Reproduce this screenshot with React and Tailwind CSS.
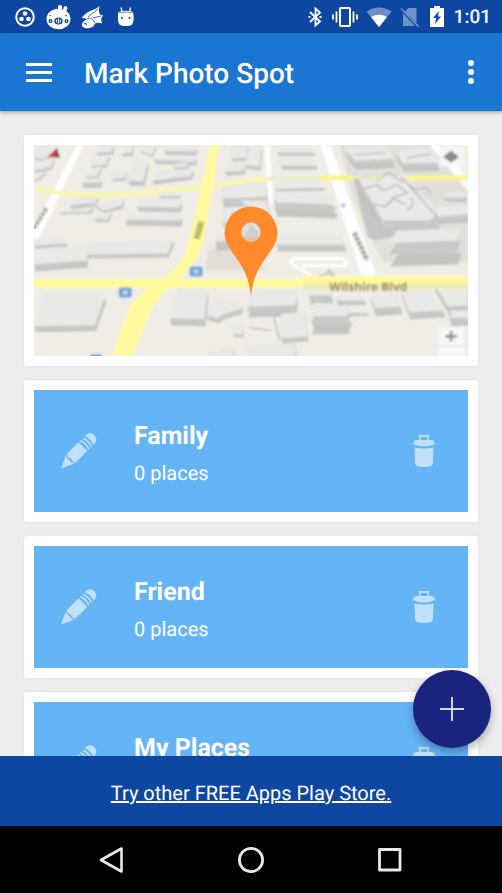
import React from "react";

const places = [
  { name: "Family", count: 0 },
  { name: "Friend", count: 0 },
  { name: "My Places", count: 0 },
];

// roof outline, height of the wall below it
const buildings = [
  ["0,2 18,0 22,8 8,14 0,12", 3],
  ["0,17 20,13 17,22 0,26", 3],
  ["0,28 12,27 6,33 0,35", 2],
  ["65,1 80,0 78,7 62,8", 3],
  ["61,12 76,10 72,20 57,21", 3],
  ["55,24 67,22 64,31 52,32", 3],
  ["50,34 68,33 67,38 48,38", 5],
  ["89,2 100,0 98,8 88,9", 3],
  ["108,0 122,2 118,10 106,6", 2],
  ["100,17 114,16 110,36 94,36", 5],
  ["80,27 92,24 92,33 78,34", 3],
  ["133,1 163,2 161,7 130,6", 4],
  ["122,12 163,13 161,17 120,15", 4],
  ["142,19 155,18 153,22 139,22", 3],
  ["125,26 160,24 157,31 118,36", 4],
  ["40,54 64,50 62,58 36,61", 4],
  ["28,66 60,62 56,67 24,68", 2],
  ["60,60 90,54 88,61 70,66", 3],
  ["64,70 78,67 74,75 60,74", 3],
  ["126,48 145,47 146,51 125,51", 3],
  ["106,54 148,56 146,63 103,62", 5],
  ["94,71 148,69 147,76 91,75", 6],
  ["0,94 30,93 33,99 0,101", 3],
  ["0,105 53,101 53,116 0,120", 7],
  ["54,99 140,95 134,109 53,110", 4],
  ["10,149 72,150 61,181 0,182", 6],
  ["144,144 174,144 171,175 136,174", 7],
  ["176,157 186,154 209,160 207,165 190,170 184,174 173,171", 5],
  ["200,181 209,181 209,190 200,190", 3],
  ["176,207 200,206 200,212 176,212", 0],
  ["215,202 260,199 262,212 214,212", 0],
  ["198,1 214,0 213,13 198,14", 3],
  ["193,20 212,18 210,26 191,27", 4],
  ["215,3 228,2 226,22 212,20", 4],
  ["189,38 233,36 234,52 189,54", 9],
  ["189,64 200,63 196,78 189,78", 4],
  ["207,56 233,56 235,66 224,70", 3],
  ["182,91 198,91 198,96 182,97", 9],
  ["246,2 278,2 282,8 244,8", 3],
  ["246,13 278,12 284,21 248,21", 4],
  ["242,39 284,37 292,43 242,44", 3],
  ["240,49 290,48 303,56 302,60 243,58", 14],
  ["245,91 308,91 312,100 243,100", 7],
  ["312,4 350,0 362,14 322,16", 9],
  ["362,7 398,3 406,18 370,19", 8],
  ["324,32 372,30 406,68 396,76 350,76", 15],
  ["414,48 430,48 434,53 410,53", 4],
  ["402,63 435,60 435,70 404,72", 8],
  ["364,86 428,84 424,96 356,98", 24],
  ["216,145 264,146 262,161 214,162", 11],
  ["276,140 296,142 300,151 276,151", 9],
  ["248,169 272,168 274,192 248,194", 5],
  ["281,158 318,160 314,172 278,172", 18],
  ["303,150 330,151 332,156 304,156", 5],
  ["314,165 334,166 334,169 314,169", 3],
  ["337,150 365,149 368,162 342,164", 8],
  ["368,146 396,145 412,166 376,168", 7],
  ["403,142 435,142 435,161 414,162", 5],
  ["416,169 435,168 435,173 418,174", 8],
];

// thin lines between roof sections
const roofLines = [
  "M330 44 l14 -4 6 6 14 -6 10 8 -16 6",
  "M340 60 l12 2 8 -8 12 6",
  "M376 40 l8 6 8 -4 6 8",
  "M374 66 l6 -6 -2 -6",
  "M344 36 l12 -8 14 10",
  "M322 34 l10 20 14 24",
  "M368 32 l36 40",
  "M322 10 l30 -2",
  "M374 13 l24 -4",
  "M216 184 l22 2 M240 170 l6 26",
  "M280 134 l16 -6 8 8 M292 130 l4 -4 12 14",
  "M400 142 l18 30",
];

function SpotMap() {
  return (
    <svg
      viewBox="0 0 435 212"
      preserveAspectRatio="xMidYMid slice"
      className="block h-[211px] w-full"
      role="img"
      aria-label="Map"
    >
      <defs>
        <filter id="soft" x="0" y="0" width="100%" height="100%">
          <feGaussianBlur stdDeviation="0.9" />
        </filter>
        <linearGradient id="hole" x1="0" y1="0" x2="0" y2="1">
          <stop offset="0.6" stopColor="#dededd" />
          <stop offset="0.75" stopColor="#e3c3a2" />
        </linearGradient>
      </defs>
      <rect width="435" height="212" fill="#f0ede7" />
      <g filter="url(#soft)">
        <rect width="435" height="212" fill="#f0ede7" />
        <path d="M306 0H400L435 36V118H350L322 60Z" fill="#e2e0dc" />
        <path d="M175 104H230V126H172Z" fill="#e1dcd6" />
        <path d="M320 32L334 92Q340 98 352 94L392 84 384 60Z" fill="#c6c6c5" />
        {/* side streets */}
        <path d="M43 0H50L21 60 0 104V84Z" fill="#fff" />
        <path d="M231 0H236L240 60H235Z" fill="#fff" />
        <path d="M396 0H406L435 34V46Z" fill="#fff" />
        <path
          d="M278 131L260 121Q254 115 262 114H310Q316 118 311 121H268"
          fill="none"
          stroke="#fff"
          strokeWidth="3"
        />
        {buildings.map(([points, wall]) => (
          <g key={points}>
            <polygon points={points} fill="#c4c4c2" transform={`translate(1 ${wall})`} />
            <polygon points={points} fill="#c9c9c7" transform={`translate(0 ${wall / 2})`} />
            <polygon points={points} fill="#e9e9e8" />
          </g>
        ))}
        {roofLines.map((d) => (
          <path key={d} d={d} fill="none" stroke="#bdbdbc" strokeWidth="1.6" />
        ))}
        <path d="M287 0H297L343 131H328Z" fill="#fff" />
        {/* main roads */}
        <path
          d="M0 45Q60 54 100 49L170 42 232 34"
          fill="none"
          stroke="#fbf8a0"
          strokeWidth="4"
        />
        <path d="M232 34H287" stroke="#eeedcb" strokeWidth="4" />
        <path d="M287 33H320M374 33H435" stroke="#fbf58d" strokeWidth="5" />
        <path d="M320 33H350" stroke="#e9e7c2" strokeWidth="3" />
        <path d="M0 139H262L276 136H435" fill="none" stroke="#fefa9c" strokeWidth="9" />
        <path d="M270 142H435" stroke="#efecb4" strokeWidth="6" />
        <path
          d="M177 0H185L179 45 169 100Q164 118 142 138 120 156 114 174L99 212H78L92 172Q98 152 124 138 150 122 155 97L167 45Z"
          fill="#fefa9c"
        />
        {/* street names */}
        <path d="M163 94L168 77" stroke="#a9a05c" strokeWidth="6" strokeDasharray="3 1" />
        <path d="M321 88L334 116" stroke="#a7a7a6" strokeWidth="5" strokeDasharray="4 1" />
        <path d="M0 84L13 63" stroke="#a7a7a6" strokeWidth="4" strokeDasharray="4 1" />
        <circle cx="310" cy="61" r="2.5" fill="#c9c9c9" />
        <text
          x="296"
          y="147"
          fill="#98875a"
          className="font-['Open_Sans'] text-[12px] font-bold"
        >
          Wilshire Blvd
        </text>
        {/* transit stops */}
        <rect x="85" y="143" width="13" height="10" rx="2" fill="#6ea3d8" />
        <rect x="89" y="146" width="5" height="4" fill="#c3dbf2" />
        <rect x="156" y="122" width="13" height="10" rx="2" fill="#6ea3d8" />
        <rect x="160" y="125" width="5" height="4" fill="#c3dbf2" />
        <rect x="56" y="210" width="12" height="6" rx="2" fill="#6ea3d8" />
        {/* compass and map controls */}
        <path d="M14 12L23 3 25 13Z" fill="#cf3a3e" />
        <path d="M23 3L26 13 21 12Z" fill="#6f4a4a" />
        <rect x="406" y="1" width="25" height="21" fill="#f7f7f7" opacity="0.85" />
        <path d="M410 12L418 6 426 12 418 18Z" fill="#8b8b8b" />
        <rect x="405" y="183" width="27" height="29" fill="#f7f7f7" />
        <path d="M405 202H432" stroke="#dedede" />
        <path d="M412 192H424M418 187V197" stroke="#888" strokeWidth="2.5" />
      </g>
      <circle cx="217" cy="88" r="11" fill="url(#hole)" />
      <path d="M211 93L217 80 225 88 223 93Z" fill="#cfcfce" />
      <path
        fillRule="evenodd"
        fill="#ff8a2c"
        d="M217.500 151C215 130 208 121 201 111 195 103 191 97 191 88.500A26.500 26.500 0 0 1 244 88.500C244 97 240 103 234 111 227 121 220 130 217.500 151ZM217.500 78A9.700 9.700 0 1 0 217.500 97.400A9.700 9.700 0 1 0 217.500 78Z"
      />
    </svg>
  );
}

function StatusBar() {
  return (
    <div className="flex h-[33px] shrink-0 items-center justify-between bg-[#0d47a1] pr-[11px] pl-[15px] text-white">
      <div className="flex items-center gap-2.5">
        <svg viewBox="0 0 20 20" className="size-5" fill="currentColor">
          <circle cx="10" cy="10" r="8.800" fill="none" stroke="currentColor" strokeWidth="2" />
          <circle cx="10" cy="6.500" r="2.300" />
          <circle cx="6.500" cy="12" r="2.300" />
          <circle cx="13.500" cy="12" r="2.300" />
        </svg>
        {/* pig */}
        <svg viewBox="0 0 26 26" className="size-[26px]" fill="currentColor">
          <path d="M13 5V2Q15 0 17 2V5ZM18 6L19 2.500Q22 1.500 22.500 4L21 8Z" />
          <ellipse cx="13.500" cy="15" rx="12" ry="10.300" />
          <g fill="#0d47a1">
            <ellipse cx="13.500" cy="17" rx="4.200" ry="3.600" />
            <circle cx="5.500" cy="17" r="2" />
            <circle cx="21.500" cy="17" r="2" />
            <circle cx="5" cy="11.500" r="0.700" />
            <circle cx="21" cy="11.500" r="0.700" />
          </g>
          <path d="M11.200 15.500h1v3h-1zM14.800 15.500h1v3h-1zM13 14.500h1v5h-1z" />
          <circle cx="5.500" cy="17" r="0.700" />
          <circle cx="21.500" cy="17" r="0.700" />
        </svg>
        {/* dragon */}
        <svg viewBox="0 0 22 24" className="h-6 w-[22px]" fill="currentColor">
          <path d="M0.500 13Q5 7 12 5 16 3.500 18.500 1 17 5 18.500 9L22 10.500Q19 13 21 18.500 17 17 14 18.500 13 22 9 23 4 24 2 22 0 20 2 17 4 15 6 14 3 12.500 0.500 13Z" />
          <path
            d="M6 14Q11 11 14 18M12 13L20 11M7 12L17 4"
            fill="none"
            stroke="#0d47a1"
            strokeWidth="0.800"
          />
          <path d="M3 17.500Q6 17 6 20 3.500 20 3 17.500Z" fill="#0d47a1" />
        </svg>
        {/* robot */}
        <svg viewBox="0 0 20 22" className="ml-1 h-[22px] w-5" fill="currentColor">
          <path d="M4 1.500L5 5.500M13.500 1.500L12.500 5.500" stroke="currentColor" strokeWidth="1.300" />
          <path d="M1.500 6Q9 3.500 16 6 17.500 13 15.500 18 14 20 9 20 4 20 2 18 0 13 1.500 6Z" />
          <path d="M2 7Q9 5 16 7" fill="none" stroke="#0d47a1" strokeWidth="0.600" />
          <circle cx="5" cy="12" r="1" fill="#0d47a1" />
          <circle cx="12.500" cy="12" r="1" fill="#0d47a1" />
        </svg>
      </div>
      <div className="flex items-center">
        <svg viewBox="0 0 14 20" className="mr-2.5 h-5 w-3.5" fill="none" stroke="currentColor" strokeWidth="1.800">
          <path d="M2 5L12 14.500 7.500 18.500V1.500L12 5.500 2 15" />
          <path d="M0.500 10H2.500M11.500 10H13.500" />
        </svg>
        <svg viewBox="0 0 26 20" className="mr-2 h-5 w-[26px]" fill="none" stroke="currentColor">
          <rect x="8" y="1" width="10" height="18" rx="1" strokeWidth="2" />
          <path d="M4.500 4.500V15.500M21.500 4.500V15.500" strokeWidth="1.800" />
          <path d="M1 7.500V12.500M25 7.500V12.500" strokeWidth="1.800" />
        </svg>
        <svg viewBox="0 0 26 20" className="mr-2 h-5 w-[26px]" fill="currentColor">
          <path d="M13 20L0.500 4.500Q13 -3.500 25.500 4.500Z" opacity="0.400" />
          <path d="M13 20L5 10Q13 5.500 21 10Z" />
        </svg>
        <svg viewBox="0 0 20 20" className="mr-2.5 size-5 opacity-40" fill="currentColor">
          <path d="M8 1H16.500V16L5 5ZM3 6L15 19H3Z" />
          <path d="M1 1.500L18.500 19.500" stroke="currentColor" strokeWidth="1.600" />
        </svg>
        <svg viewBox="0 0 14 21" className="mr-2.5 h-[21px] w-3.5" fill="currentColor">
          <path d="M4 0H10V2H14V21H0V2H4Z" />
          <path d="M9 5L3 12H6.200L5 18 11 10.500H8Z" fill="#0d47a1" />
        </svg>
        <span className="text-[19px] leading-6 font-medium">1:01</span>
      </div>
    </div>
  );
}

function PencilIcon() {
  return (
    <svg viewBox="0 0 36 36" className="size-9" fill="#c1e1fb">
      <g transform="translate(0 35.500) rotate(-45) scale(0.970)">
        <path d="M0 0L13 -6Q11 -3 12.500 0 11 3 13 6Z" />
        <path d="M14.500 -6.300H32V6.300H14.500Q12.500 3 14.500 0 12.500 -3 14.500 -6.300Z" />
        <path d="M33.500 -6.300H35.200Q37.700 0 35.200 6.300H33.500Q36 0 33.500 -6.300Z" />
        <path d="M37.200 -6.300H39Q41.500 0 39 6.300H37.200Q39.700 0 37.200 -6.300Z" />
        <path d="M41 -6.300H43Q48.500 -5.500 48.500 0 48.500 5.500 43 6.300H41Q43.300 0 41 -6.300Z" />
      </g>
    </svg>
  );
}

function TrashIcon() {
  return (
    <svg viewBox="0 0 22 32" className="h-8 w-[22px]" fill="#c1e1fb">
      <path d="M6 5V0H16V5H14.500V2H7.500V5Z" />
      <path d="M3 5H19Q22 6 22 9 17 11.500 11 11.500 5 11.500 0 9 0 6 3 5Z" />
      <path d="M1.500 12.500Q11 14.500 20.500 12.500L19.800 29Q19.500 32 11 32 2.500 32 2.200 29Z" />
    </svg>
  );
}

function PlaceCard({ name, count }) {
  return (
    <li className="rounded-[3px] bg-white p-2.5 shadow-[0_0_2px_rgba(0,0,0,0.08)]">
      <div className="flex h-[122px] items-center bg-[#64b4f6] pr-[33px] pl-[27px]">
        <button type="button" aria-label={`Edit ${name}`}>
          <PencilIcon />
        </button>
        <div className="ml-[37px] flex-1 pt-2 text-white">
          <h2 className="text-[25px] leading-8 font-bold">{name}</h2>
          <p className="mt-1 text-xl leading-8">{count} places</p>
        </div>
        <button type="button" aria-label={`Delete ${name}`}>
          <TrashIcon />
        </button>
      </div>
    </li>
  );
}

export default function App() {
  return (
    <div className="flex h-screen flex-col overflow-hidden bg-[#ededed] font-[Roboto,sans-serif] [text-rendering:geometricPrecision]">
      <StatusBar />

      <header className="z-10 flex h-[78px] shrink-0 items-center bg-[#1976d2] px-[26px] text-white shadow-[0_1px_4px_rgba(0,0,0,0.4)]">
        <button type="button" aria-label="Menu" className="flex w-[26px] flex-col gap-[5px]">
          <span className="h-[3px] w-full bg-white" />
          <span className="h-[3px] w-full bg-white" />
          <span className="h-[3px] w-full bg-white" />
        </button>
        <h1 className="ml-8 flex-1 pt-1 text-[28px] leading-9 font-medium">Mark Photo Spot</h1>
        <button type="button" aria-label="More options" className="flex w-2.5 flex-col items-center gap-[3px]">
          <span className="size-[6px] rounded-full bg-white" />
          <span className="size-[6px] rounded-full bg-white" />
          <span className="size-[6px] rounded-full bg-white" />
        </button>
      </header>

      <main className="relative min-h-0 flex-1">
        <div className="h-full overflow-hidden px-6 pt-6">
          <div className="rounded-[3px] bg-white p-2.5 shadow-[0_0_2px_rgba(0,0,0,0.08)]">
            <SpotMap />
          </div>
          <ul className="mt-3.5 flex flex-col gap-3.5">
            {places.map((place) => (
              <PlaceCard key={place.name} {...place} />
            ))}
          </ul>
        </div>
        {/* floating add button */}
        <button
          type="button"
          aria-label="Add place"
          className="absolute right-[11px] bottom-2 flex size-[78px] items-center justify-center rounded-full bg-[#1a237e] shadow-[0_4px_8px_rgba(0,0,0,0.3)]"
        >
          <svg viewBox="0 0 26 26" className="size-[26px]" stroke="#d3d4e5" strokeWidth="2">
            <path d="M1 13H25M13 1V25" />
          </svg>
        </button>
      </main>

      <footer className="z-10 flex h-[70px] shrink-0 items-center justify-center bg-[#0d47a1] pt-1">
        <a href="#apps" className="text-xl leading-6 text-white underline">
          Try other FREE Apps Play Store.
        </a>
      </footer>

      <nav className="z-10 flex h-[67px] shrink-0 items-center justify-center gap-[113px] bg-black text-[#e8e8e8]">
        <button type="button" aria-label="Back">
          <svg viewBox="0 0 26 28" className="h-7 w-[26px]" fill="none" stroke="currentColor" strokeWidth="2.600" strokeLinejoin="round">
            <path d="M2 14L22.500 2.500V25.500Z" />
          </svg>
        </button>
        <button type="button" aria-label="Home">
          <svg viewBox="0 0 26 26" className="size-[26px]" fill="none" stroke="currentColor" strokeWidth="2.800">
            <circle cx="13" cy="13" r="11.600" />
          </svg>
        </button>
        <button type="button" aria-label="Recent apps">
          <svg viewBox="0 0 26 26" className="size-[26px]" fill="none" stroke="currentColor" strokeWidth="2.800" strokeLinejoin="round">
            <rect x="2.500" y="2.500" width="20.500" height="20.500" />
          </svg>
        </button>
      </nav>
    </div>
  );
}
